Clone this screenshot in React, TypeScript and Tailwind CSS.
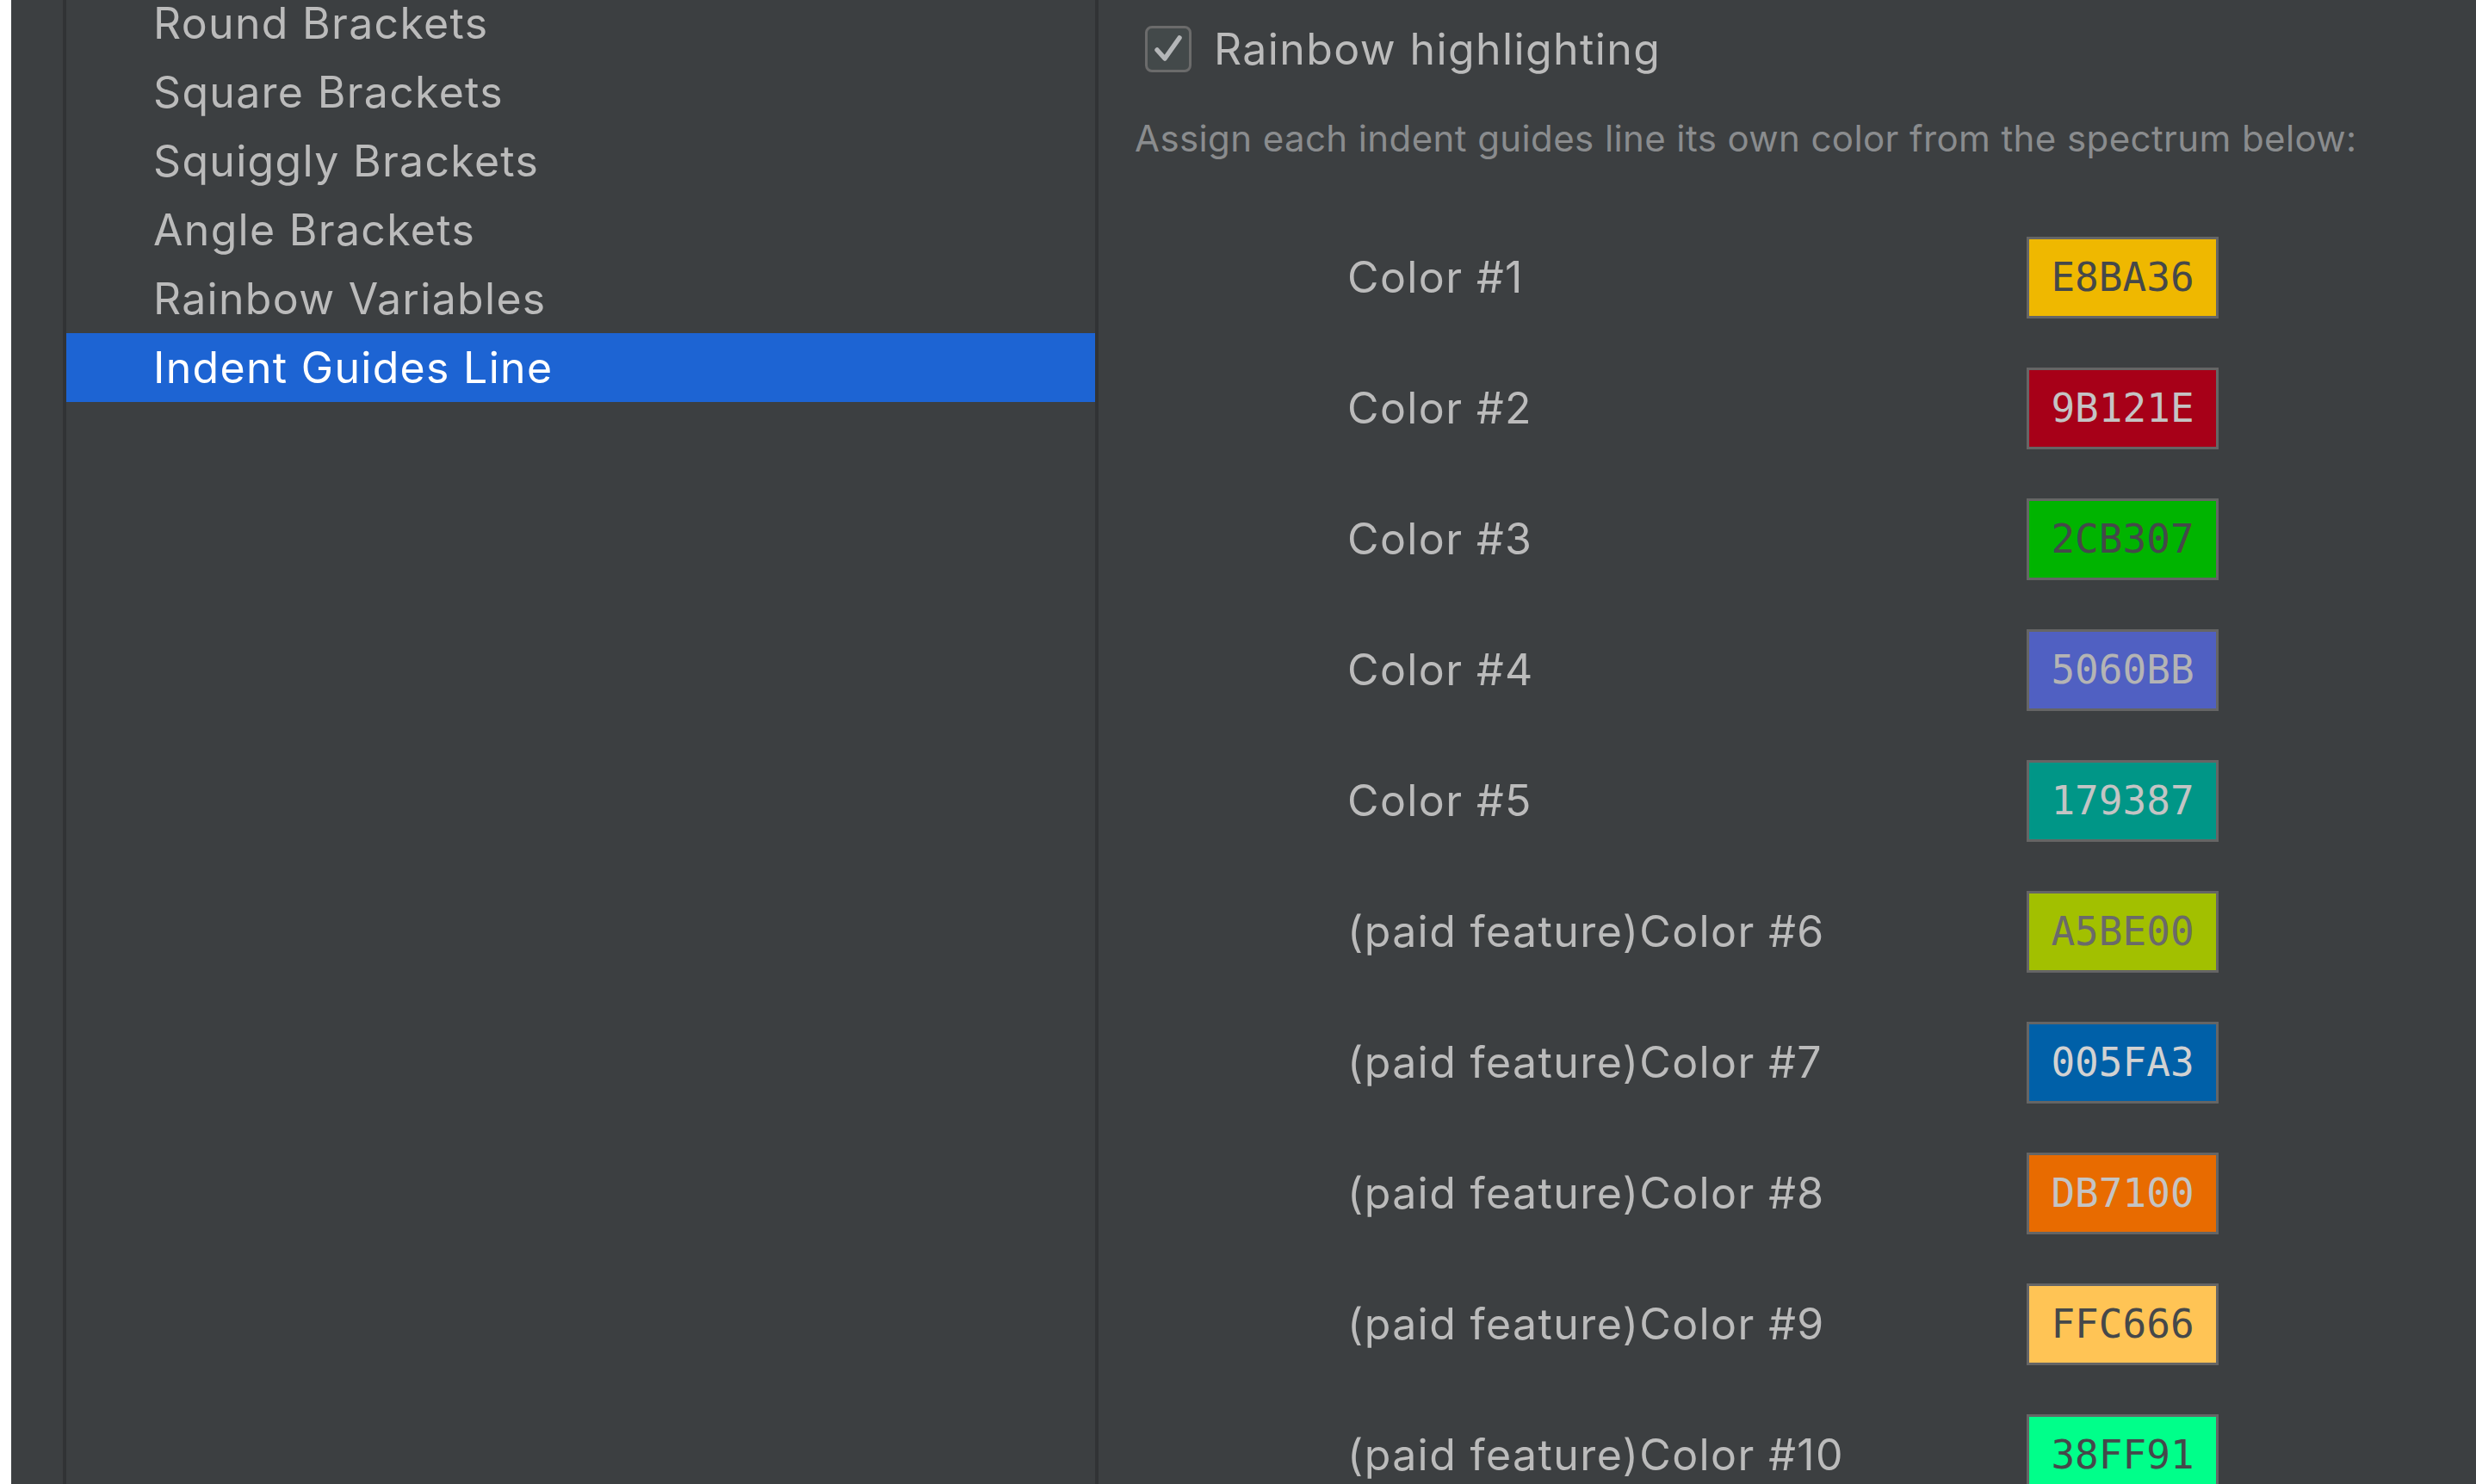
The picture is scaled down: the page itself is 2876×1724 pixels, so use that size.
import React from 'react'

const SANS = "font-['Inter','Liberation_Sans',sans-serif]"
const MONO = "font-['DejaVu_Sans_Mono','Liberation_Mono',monospace]"

const listItems = [
  'Round Brackets',
  'Square Brackets',
  'Squiggly Brackets',
  'Angle Brackets',
  'Rainbow Variables',
  'Indent Guides Line',
]

interface Swatch {
  label: string
  hex: string
  bg: string
  fg: string
}

const swatches: Swatch[] = [
  { label: 'Color #1', hex: 'E8BA36', bg: 'bg-[#efb800]', fg: 'text-[#45484a]' },
  { label: 'Color #2', hex: '9B121E', bg: 'bg-[#a70018]', fg: 'text-[#c4c4c4]' },
  { label: 'Color #3', hex: '2CB307', bg: 'bg-[#00b400]', fg: 'text-[#45484a]' },
  { label: 'Color #4', hex: '5060BB', bg: 'bg-[#5060c2]', fg: 'text-[#b4b4b4]' },
  { label: 'Color #5', hex: '179387', bg: 'bg-[#009687]', fg: 'text-[#c4c4c4]' },
  { label: '(paid feature)Color #6', hex: 'A5BE00', bg: 'bg-[#a2c000]', fg: 'text-[#6a6a6a]' },
  { label: '(paid feature)Color #7', hex: '005FA3', bg: 'bg-[#0060a8]', fg: 'text-[#d2d2d2]' },
  { label: '(paid feature)Color #8', hex: 'DB7100', bg: 'bg-[#e86b00]', fg: 'text-[#c4c4c4]' },
  { label: '(paid feature)Color #9', hex: 'FFC666', bg: 'bg-[#ffc455]', fg: 'text-[#45484a]' },
  { label: '(paid feature)Color #10', hex: '38FF91', bg: 'bg-[#00ff8a]', fg: 'text-[#45484a]' },
]

export default function App() {
  return (
    <div className={`flex h-[1724px] w-[2876px] overflow-hidden bg-[#3c3f41] ${SANS}`}>
      {/* window edge */}
      <div className="w-[13px] shrink-0 bg-white" />

      {/* gutter */}
      <div className="w-[64px] shrink-0 border-r-4 border-[#313335]" />

      {/* category list */}
      <div className="w-[1195px] shrink-0 -mt-[13px]">
        {listItems.map((item, i) => {
          const selected = i === listItems.length - 1
          return (
            <div
              key={item}
              className={`flex h-[80px] items-center pl-[101px] text-[50px] tracking-[1.3px] ${
                selected ? 'bg-[#1d64d3] text-white' : 'text-[#bbbbbb]'
              }`}>
              {item}
            </div>
          )
        })}
      </div>

      <div className="w-[4px] shrink-0 bg-[#313335]" />

      {/* settings panel */}
      <div className="flex-1">
        <div className="flex items-center gap-[26px] pl-[54px] pt-[30px]">
          <div className="flex h-[54px] w-[54px] items-center justify-center rounded-[8px] border-[3px] border-[#6b6b6b] bg-[#43494a]">
            <svg width="40" height="40" viewBox="0 0 40 40" fill="none">
              <path d="M7 21l9 10 17-24" stroke="#b4b6b8" strokeWidth="5.5" strokeLinecap="round" strokeLinejoin="round" />
            </svg>
          </div>
          <span className="text-[50px] leading-[54px] tracking-[1.4px] text-[#bbbbbb]">Rainbow highlighting</span>
        </div>

        <p className="mt-[52px] pl-[42px] text-[42px] leading-[50px] tracking-[0.4px] text-[#8a8c8e]">
          Assign each indent guides line its own color from the spectrum below:
        </p>

        <div className="mt-[60px] pl-[289px]">
          {swatches.map(s => (
            <div key={s.hex} className="flex h-[152px] items-center">
              <span className="w-[789px] shrink-0 text-[50px] tracking-[1.4px] text-[#bbbbbb]">{s.label}</span>
              <div
                className={`flex h-[95px] w-[223px] items-center justify-center border-[3px] border-[#656565] ${s.bg} ${s.fg} ${MONO} text-[46px]`}>
                {s.hex}
              </div>
            </div>
          ))}
        </div>
      </div>
    </div>
  )
}
